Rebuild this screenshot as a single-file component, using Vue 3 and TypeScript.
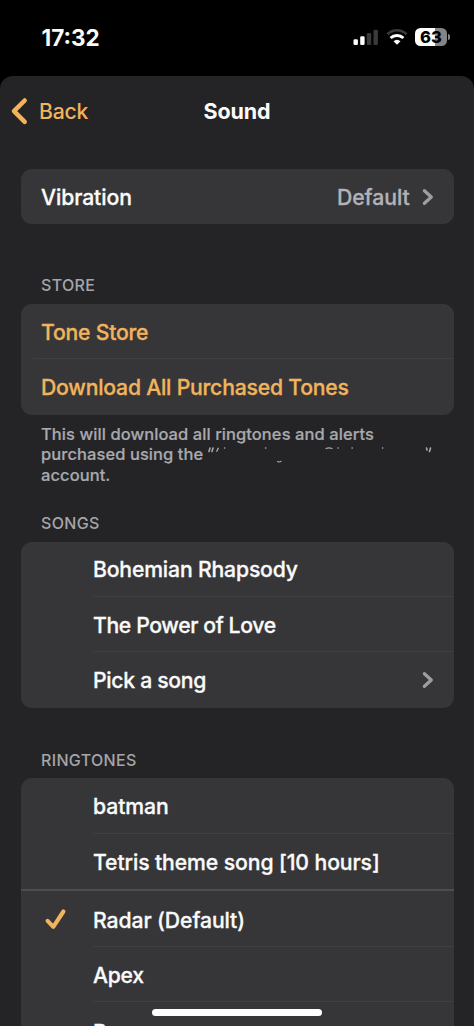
<script setup lang="ts">
interface Row {
  label: string
  cls: string
  chevron?: boolean
  checked?: boolean
  thick?: boolean
}

const songs: Row[] = [
  { label: 'Bohemian Rhapsody', cls: 't-bohemian' },
  { label: 'The Power of Love', cls: 't-power' },
  { label: 'Pick a song', cls: 't-pick', chevron: true },
]

const ringtones: Row[] = [
  { label: 'batman', cls: 't-batman' },
  { label: 'Tetris theme song [10 hours]', cls: 't-tetris', thick: true },
  { label: 'Radar (Default)', cls: 't-radar', checked: true },
  { label: 'Apex', cls: 't-apex' },
  { label: 'Beacon', cls: 't-beacon' },
]
</script>

<template>
  <div class="screen">
    <div class="status">
      <span class="time">17:32</span>
      <div class="indicators">
        <svg class="signal" width="26" height="18" viewBox="0 0 26 18">
          <rect x="0.5" y="11.3" width="4.4" height="5.7" rx="1.3" fill="#fff" />
          <rect x="7.2" y="8.3" width="4.4" height="8.7" rx="1.3" fill="#fff" />
          <rect x="13.8" y="5" width="4.4" height="12" rx="1.3" fill="#3a3a3a" />
          <rect x="20.5" y="1.7" width="4.4" height="15.3" rx="1.3" fill="#3a3a3a" />
        </svg>
        <svg class="wifi" width="22" height="18" viewBox="0 0 22 18">
          <path d="M1.4 6.2 C7 .9 15 .9 20.6 6.2" fill="none" stroke="#3a3a3a" stroke-width="2.7" />
          <path d="M4.6 10 C8.2 6.5 13.8 6.5 17.4 10" fill="none" stroke="#fff" stroke-width="3" />
          <path d="M7.5 13.2 Q11 10.2 14.5 13.2 L11 16.8 Z" fill="#fff" />
        </svg>
        <div class="battery">63</div>
        <span class="nub"></span>
      </div>
    </div>

    <main class="sheet">
      <header class="nav">
        <svg class="back-icon" width="18" height="28" viewBox="0 0 18 28">
          <path d="M14.7 3.5 L4 14.2 L14.7 24.8" fill="none" stroke="#f1b45c" stroke-width="4.5" stroke-linecap="round" stroke-linejoin="round" />
        </svg>
        <span class="back">Back</span>
        <h1>Sound</h1>
      </header>

      <section class="card vibration">
        <div class="row">
          <span class="t-vibration">Vibration</span>
          <span class="value">Default</span>
          <svg class="chevron" width="12" height="18" viewBox="0 0 12 18">
            <path d="M2.4 2.7 L9.3 9 L2.4 15.3" fill="none" stroke="#9c9ca1" stroke-width="3.3" stroke-linecap="round" stroke-linejoin="round" />
          </svg>
        </div>
      </section>

      <h2 class="label store-label">STORE</h2>
      <section class="card store">
        <div class="row link line"><span class="t-tone">Tone Store</span></div>
        <div class="row link"><span class="t-download">Download All Purchased Tones</span></div>
      </section>
      <p class="note">
        <span class="n1">This will download all ringtones and alerts</span>
        <span class="n2">purchased using the
          <svg class="remnant" width="226" height="18" viewBox="0 0 226 18" fill="none" stroke="#a9a9ae" stroke-linecap="round">
            <path d="M3 2 L2 5.5 M6 2 L5 5.5" stroke-width="1.6" />
            <path d="M11.2 2.3 L9.8 5.2 M17.5 2 h.2 M58.5 2 h.3 M131 2 h.3 M145 2 h.3 M175.5 2 h.3" stroke-width="1.4" />
            <path d="M119 2.6 Q122 1.2 125 2.6 M70.5 15.5 Q72.5 16.5 74 15.3" stroke-width="1.1" />
            <path d="M219.5 2 L220 4 M223.5 2 L222.5 5.5" stroke-width="1.6" />
          </svg>
        </span>
        <span class="n3">account.</span>
      </p>

      <h2 class="label songs-label">SONGS</h2>
      <section class="card songs">
        <div v-for="(row, i) in songs" :key="row.label" class="row indent" :class="{ line: i < songs.length - 1 }">
          <span :class="row.cls">{{ row.label }}</span>
          <svg v-if="row.chevron" class="chevron end" width="12" height="18" viewBox="0 0 12 18">
            <path d="M2.4 2.7 L9.3 9 L2.4 15.3" fill="none" stroke="#9c9ca1" stroke-width="3.3" stroke-linecap="round" stroke-linejoin="round" />
          </svg>
        </div>
      </section>

      <h2 class="label ring-label">RINGTONES</h2>
      <section class="card">
        <div v-for="row in ringtones" :key="row.label" class="row indent" :class="row.thick ? 'thick' : 'line'">
          <svg v-if="row.checked" class="check" width="24" height="24" viewBox="0 0 24 24">
            <path d="M3.6 12.8 L9.3 18.8 L19.4 3.5" fill="none" stroke="#f1b45c" stroke-width="4.1" stroke-linecap="round" stroke-linejoin="round" />
          </svg>
          <span :class="row.cls">{{ row.label }}</span>
        </div>
      </section>
    </main>
    <div class="home"></div>
  </div>
</template>

<style>
html,
body {
  background: #000;
  overflow: hidden;
}
</style>

<style scoped>
.screen {
  position: relative;
  width: 474px;
  height: 1026px;
  overflow: hidden;
  background: #000;
  color: #fafafa;
  font-family: Inter, 'Liberation Sans', sans-serif;
  font-weight: 500;
  font-size: 21.2px;
  letter-spacing: -0.1px;
  white-space: nowrap;
  display: flex;
  flex-direction: column;
}
.status {
  height: 76px;
  flex: none;
  display: flex;
  justify-content: space-between;
  align-items: flex-start;
  padding: 0 24px 0 41.5px;
  box-sizing: border-box;
}
.time {
  margin-top: 25px;
  line-height: 26px;
  font-size: 22.5px;
  letter-spacing: 0;
  font-weight: 700;
}
.indicators {
  display: flex;
  align-items: center;
  margin-top: 28px;
  height: 18px;
}
.wifi {
  margin-left: 7px;
}
.battery {
  margin-left: 7.5px;
  width: 32px;
  height: 18px;
  border-radius: 5.5px;
  background: linear-gradient(90deg, #fff 63%, #858585 63%);
  color: #000;
  font-size: 16.5px;
  line-height: 18px;
  font-weight: 800;
  letter-spacing: 0;
  text-align: center;
}
.nub {
  width: 2px;
  height: 6px;
  margin-left: 1px;
  border-radius: 0 2px 2px 0;
  background: #858585;
}
.sheet {
  flex: none;
  height: 950px;
  overflow: hidden;
  background: #242426;
  border-radius: 13px 13px 0 0;
  padding: 0 20.5px;
  box-sizing: border-box;
}
.nav {
  height: 70px;
  display: grid;
  grid-template-columns: 18px 1fr 1fr;
  align-items: center;
  margin: 0 -10.5px 23px;
  position: relative;
}
.back {
  color: #f1b45c;
  padding-left: 11px;
  letter-spacing: -0.2px;
}
h1 {
  position: absolute;
  left: 0;
  right: 0;
  margin: 0;
  text-align: center;
  font-size: 21.5px;
  line-height: 26px;
  font-weight: 700;
}
.card {
  background: #363638;
  border-radius: 11px;
  overflow: hidden;
}
.row {
  height: 55.4px;
  box-sizing: border-box;
  display: flex;
  align-items: center;
  padding: 1px 19.5px 0 20.5px;
  position: relative;
  -webkit-text-stroke: 0.3px currentColor;
}
.songs .row {
  padding-top: 0;
}
.indent {
  padding-left: 72.5px;
}
.line::after {
  content: '';
  position: absolute;
  left: 12px;
  right: 0;
  bottom: 0;
  height: 1px;
  background: #3f3f41;
}
.indent.line::after {
  left: 72px;
}
.thick {
  height: 58px;
  padding-bottom: 2.2px;
}
.thick::after {
  content: '';
  position: absolute;
  left: 0;
  right: 0;
  bottom: 1px;
  height: 2px;
  background: #4d4d4f;
}
.link {
  color: #f1b45c;
}
.t-tone,
.t-download {
  letter-spacing: -0.22px;
}
.t-bohemian {
  letter-spacing: -0.17px;
}
.t-power {
  letter-spacing: -0.38px;
}
.t-pick,
.t-apex {
  letter-spacing: -0.3px;
}
.t-beacon {
  padding-top: 3px;
}
.value {
  margin-left: auto;
  margin-right: 12.2px;
  letter-spacing: -0.02px;
  color: #b2b2b8;
}
.end {
  margin-left: auto;
}
.check {
  position: absolute;
  left: 23px;
  top: 16px;
}
.label {
  margin: 0;
  color: #a5a5aa;
  font-size: 16px;
  font-weight: 500;
  letter-spacing: 0.34px;
  line-height: 20px;
  padding-left: 20.5px;
}
.store-label {
  margin: 50.5px 0 9px;
}
.songs-label {
  margin: 27.5px 0 9px;
}
.ring-label {
  margin: 41.9px 0 8.6px;
}
.note {
  margin: 9.5px 0 0;
  padding-left: 20.5px;
  color: #a9a9ae;
  font-size: 16.5px;
  letter-spacing: 0.07px;
  line-height: 20.3px;
  display: flex;
  flex-direction: column;
  -webkit-text-stroke: 0.2px currentColor;
}
.n2 {
  display: flex;
  height: 20.3px;
}
.remnant {
  flex: none;
  margin-left: 3.8px;
  margin-top: 1.5px;
}
.home {
  position: absolute;
  left: 152px;
  top: 1009px;
  width: 170px;
  height: 7px;
  border-radius: 4px;
  background: #fff;
}
</style>
